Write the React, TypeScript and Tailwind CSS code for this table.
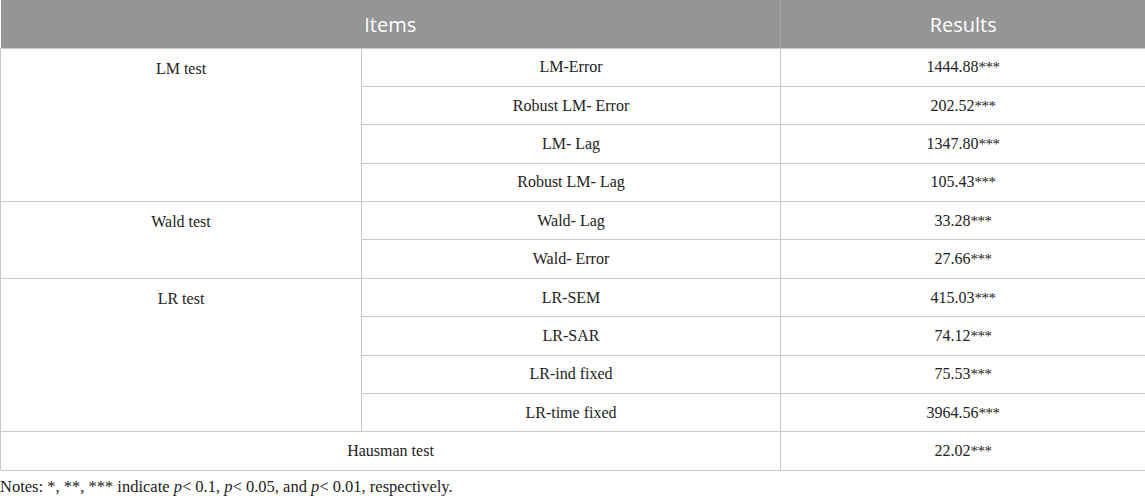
const groups = [
  {
    name: "LM test",
    rows: [
      ["LM-Error", "1444.88"],
      ["Robust LM- Error", "202.52"],
      ["LM- Lag", "1347.80"],
      ["Robust LM- Lag", "105.43"],
    ],
  },
  {
    name: "Wald test",
    rows: [
      ["Wald- Lag", "33.28"],
      ["Wald- Error", "27.66"],
    ],
  },
  {
    name: "LR test",
    rows: [
      ["LR-SEM", "415.03"],
      ["LR-SAR", "74.12"],
      ["LR-ind fixed", "75.53"],
      ["LR-time fixed", "3964.56"],
    ],
  },
];

function Stars() {
  return <span className="text-[15px] tracking-[-0.5px]">***</span>;
}

export default function App() {
  const cell = "border border-[#c8c8c8] h-[38.4px] px-2 text-center align-middle";
  return (
    <main className="w-[1145px] bg-white text-[#222] font-['Liberation_Serif',serif] text-[16px]">
      <table className="w-full border-collapse table-fixed">
        <colgroup>
          <col className="w-[361px]" />
          <col className="w-[419px]" />
          <col className="w-[365px]" />
        </colgroup>
        <thead>
          <tr className="bg-[#959595] h-[48px] text-white font-['Open_Sans',sans-serif] text-[20px]">
            <th colSpan={2} className="font-normal pt-[2px] border-r border-[#a8a8a8] border-b border-b-[#c8c8c8]">
              Items
            </th>
            <th className="font-normal pt-[2px] border-b border-[#c8c8c8]">Results</th>
          </tr>
        </thead>
        <tbody>
          {groups.map((g) =>
            g.rows.map(([item, val], i) => (
              <tr key={item}>
                {i === 0 && (
                  <td rowSpan={g.rows.length} className="border border-[#c8c8c8] px-2 pt-[8px] text-center align-top">
                    {g.name}
                  </td>
                )}
                <td className={cell}>{item}</td>
                <td className={cell}>
                  {val}
                  <Stars />
                </td>
              </tr>
            ))
          )}
          <tr>
            <td colSpan={2} className={cell}>
              Hausman test
            </td>
            <td className={cell}>
              22.02
              <Stars />
            </td>
          </tr>
        </tbody>
      </table>
      <p className="mt-[6px] text-[16.5px] leading-5">
        Notes: *, **, *** indicate <i>p</i>&lt; 0.1, <i>p</i>&lt; 0.05, and <i>p</i>&lt; 0.01, respectively.
      </p>
    </main>
  );
}
